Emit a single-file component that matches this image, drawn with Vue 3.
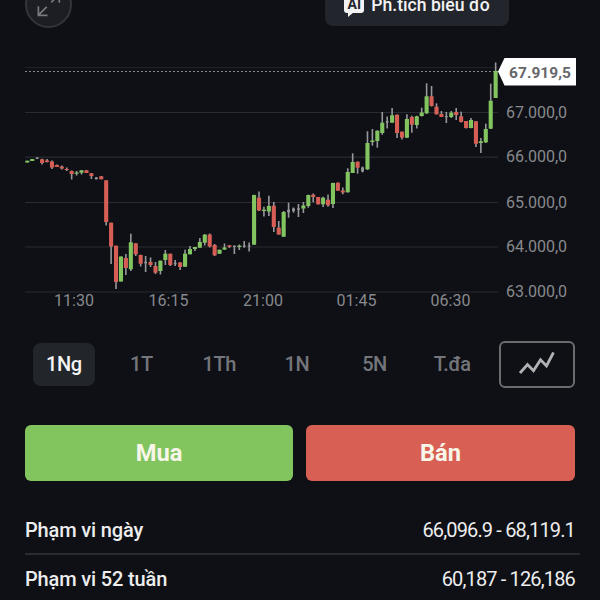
<script setup>
// Each candle: [high, body top, body bottom, low, tone] in chart pixels
const raw = [
  [160.7, 160.7, 162.5, 162.5, 'g'], [159, 159, 161, 161, 'g'], [157.5, 157.5, 159, 159, 'n'],
  [158.7, 159.3, 163, 164.5, 'r'], [159, 160.5, 162, 162.5, 'r'], [160.5, 161.5, 167.5, 169, 'r'],
  [164.5, 165, 167, 167, 'r'], [165.5, 166.5, 168.5, 169.5, 'r'], [167.5, 169, 170, 171, 'r'],
  [170.5, 171, 174, 179.5, 'r'], [171, 172.5, 173.7, 175.5, 'g'], [170, 170.3, 172.7, 174.5, 'g'],
  [170, 170.3, 173, 173, 'r'], [173, 173.3, 176, 179, 'r'], [177.3, 177.3, 179.3, 179.3, 'n'],
  [176, 176.3, 179.3, 179.3, 'r'], [180.3, 180.3, 222, 225.5, 'r'], [222.7, 222.7, 246.5, 264, 'r'],
  [245.7, 245.7, 282, 289, 'r'], [256.5, 256.5, 281.5, 281.5, 'g'], [254, 258, 268, 275, 'r'],
  [233.7, 242.3, 269.3, 271, 'g'], [243.3, 243.3, 254.3, 256, 'r'], [254.7, 255, 263.7, 266.5, 'r'],
  [256, 261.8, 263.3, 272, 'n'], [257.5, 262, 265, 267, 'r'], [262, 266, 272.7, 274, 'r'],
  [260.5, 260.7, 271, 274.5, 'g'], [250, 253.7, 260, 265, 'g'], [253.7, 253.7, 265, 266, 'r'],
  [260, 262.8, 264.2, 266, 'n'], [262, 262.5, 267, 270, 'r'], [249.7, 253.7, 266.7, 267, 'g'],
  [246, 249, 254.3, 254.3, 'g'], [247, 247, 249, 251, 'g'], [238, 242, 247.7, 247.7, 'g'],
  [234, 234.7, 242.7, 245.5, 'g'], [233.5, 234.5, 246.5, 247.5, 'r'], [244, 245, 255.3, 256, 'r'],
  [249.7, 249.7, 253.7, 254, 'g'], [243.5, 247.5, 249.5, 250, 'g'], [245, 245.3, 246.8, 248, 'r'],
  [245.5, 245.7, 247, 254, 'n'], [244.5, 245.7, 247, 250, 'g'], [241, 245.5, 246.8, 247.7, 'n'],
  [242.5, 245.5, 246.5, 251.5, 'n'], [194.7, 195, 244.7, 245, 'g'], [191.5, 197.7, 210.5, 211, 'r'],
  [206.7, 209.7, 211, 216.5, 'g'], [195.7, 206, 211.5, 216, 'g'], [202, 205.7, 227, 232, 'r'],
  [221, 227.7, 234.5, 234.7, 'r'], [211, 212, 236.7, 237, 'g'], [202.7, 209.7, 212.3, 217.7, 'n'],
  [207.5, 208.5, 211, 212.7, 'n'], [204, 208.3, 209.7, 217, 'n'], [202, 205.5, 208.5, 213, 'g'],
  [194.7, 195, 206, 207.7, 'g'], [193.5, 194.7, 197, 202.3, 'r'], [197, 197, 204.3, 204.5, 'r'],
  [196.7, 197.7, 204.3, 207, 'g'], [194.5, 199.7, 205.3, 206.7, 'r'], [182.7, 183, 204, 208, 'g'],
  [182.5, 182.7, 190.7, 191, 'r'], [187.5, 190.5, 192.5, 194.3, 'r'], [168.3, 172, 192.3, 192.5, 'g'],
  [153.3, 162, 173, 173, 'g'], [161.5, 161.7, 167.7, 173.7, 'r'], [166.5, 167.5, 171.5, 172.3, 'n'],
  [131.3, 143, 169.3, 170, 'g'], [129, 140.5, 142, 145.7, 'g'], [130.3, 130.7, 141, 147.7, 'g'],
  [112, 122.7, 133, 134.7, 'g'], [116.5, 121, 122.5, 128.5, 'n'], [108, 115.3, 122.7, 122.7, 'g'],
  [114.5, 114.7, 133, 138, 'r'], [131.5, 131.7, 137.5, 139.5, 'r'], [114.3, 119, 137.7, 138, 'g'],
  [115.7, 117, 124.7, 132.7, 'r'], [115.7, 116.3, 125, 128.5, 'g'], [107.7, 112.5, 116, 116.5, 'g'],
  [83.3, 96.3, 113.3, 114, 'g'], [86, 96.3, 106, 106.5, 'r'], [103.3, 106.7, 114.3, 114.5, 'r'],
  [111, 114, 117, 117, 'r'], [112, 116, 117.2, 123, 'n'], [111, 112.7, 117, 118, 'g'],
  [108, 112, 115, 120, 'r'], [111.7, 116.3, 122, 122.5, 'r'], [121, 121, 128, 128.5, 'r'],
  [118, 120, 128, 128.3, 'g'], [121, 121.3, 143.7, 147, 'r'], [138, 141.3, 143, 153, 'g'],
  [123.7, 129, 142.3, 143, 'g'], [83.7, 100.7, 128.7, 129, 'g'], [62.5, 71, 98, 98, 'g'],
]
const candles = raw.map(([high, top, bottom, low, tone], i) => ({
  x: 27.3 + i * 4.93, high, top, bottom, low, tone,
  w: tone === 'n' ? 2.8 : 4.1,
}))
const levels = [
  { y: 112.5, label: '67.000,0' },
  { y: 157.2, label: '66.000,0' },
  { y: 202.5, label: '65.000,0' },
  { y: 247, label: '64.000,0' },
  { y: 292, label: '63.000,0' },
]
const times = [
  { x: 74, label: '11:30' },
  { x: 168.5, label: '16:15' },
  { x: 263, label: '21:00' },
  { x: 356.5, label: '01:45' },
  { x: 450.5, label: '06:30' },
]
const periods = ['1Ng', '1T', '1Th', '1N', '5N', 'T.đa']
const ranges = [
  { name: 'Phạm vi ngày', value: '66,096.9 - 68,119.1' },
  { name: 'Phạm vi 52 tuần', value: '60,187 - 126,186' },
]
</script>

<template>
  <main class="screen">
    <header class="top">
      <button class="expand" aria-label="Toàn màn hình">
        <svg width="46" height="46" viewBox="0 0 46 46">
          <path d="M20.7 24.8 12.4 33.1M12.4 24.2V33.3H21.5M25.2 20.4 33 12.6M24.3 12.2H33.3V20.8" />
        </svg>
      </button>
      <button class="analyze">
        <span class="ai">AI</span>
        <span>Ph.tích biểu đồ</span>
      </button>
    </header>

    <svg class="chart" width="600" height="265" viewBox="0 55 600 265">
      <line class="grid faint" x1="25" x2="498" y1="67.5" y2="67.5" />
      <line v-for="l in levels" :key="l.y" class="grid" x1="25" x2="498" :y1="l.y" :y2="l.y" />
      <line class="current" x1="25" x2="498" y1="71.5" y2="71.5" />
      <g v-for="(c, i) in candles" :key="i">
        <rect class="wick" :x="c.x - 0.8" :y="c.high" width="1.6" :height="c.low - c.high" />
        <rect :class="c.tone" :x="c.x - c.w / 2" :y="c.top" :width="c.w" :height="c.bottom - c.top" />
      </g>
      <text v-for="l in levels" :key="l.label" class="axis" x="506" :y="l.y + 5.2" textLength="61">{{ l.label }}</text>
      <text v-for="t in times" :key="t.label" class="axis" :x="t.x" y="306" text-anchor="middle">{{ t.label }}</text>
      <path class="flag" d="M498 71.5 504.5 58H576V85.5H504.5Z" />
      <text class="price" x="509" y="77.8" textLength="62">67.919,5</text>
    </svg>

    <nav class="periods">
      <button v-for="(p, i) in periods" :key="p" class="period" :class="{ active: i === 0 }">{{ p }}</button>
      <button class="style" aria-label="Kiểu biểu đồ">
        <svg width="40" height="30" viewBox="0 0 40 30">
          <path d="M3 24 10.5 15.6 16.5 21.8 23.5 10.8 29.5 17 36.5 3.5" />
        </svg>
      </button>
    </nav>

    <div class="trade">
      <button class="buy">Mua</button>
      <button class="sell">Bán</button>
    </div>

    <dl class="ranges">
      <div v-for="r in ranges" :key="r.name" class="row">
        <dt>{{ r.name }}</dt>
        <dd>{{ r.value }}</dd>
      </div>
    </dl>
  </main>
</template>

<style>
body {
  background: #0e1015;
}
</style>

<style scoped>
.screen {
  width: 600px;
  height: 600px;
  overflow: hidden;
  display: flex;
  flex-direction: column;
  background: #0e1015;
  font-family: Roboto, "Noto Sans", sans-serif;
}
button {
  font: inherit;
  border: 0;
  padding: 0;
  background: none;
  box-sizing: border-box;
}
.top {
  height: 55px;
  flex: none;
  display: flex;
  justify-content: space-between;
  align-items: flex-start;
  padding: 0 91px 0 25px;
}
.expand {
  width: 47px;
  height: 47px;
  margin-top: -19px;
  border: 2px solid #33353a;
  border-radius: 50%;
  background: #1c1e23;
  display: flex;
  align-items: center;
  justify-content: center;
}
.expand svg {
  flex: none;
}
.expand path {
  fill: none;
  stroke: #77797d;
  stroke-width: 1.7;
}
.analyze {
  width: 184px;
  height: 45px;
  margin-top: -19px;
  padding-top: 2px;
  border-radius: 8px;
  background: #22262c;
  color: #f2f2f3;
  font-size: 17.6px;
  font-weight: 500;
  display: flex;
  align-items: center;
  justify-content: center;
  gap: 7px;
  white-space: nowrap;
}
.ai {
  width: 20px;
  height: 19px;
  margin-top: -3px;
  border-radius: 3px;
  background: #f2f2f3;
  color: #22262c;
  font-size: 14px;
  font-weight: 700;
  line-height: 21px;
  position: relative;
}
.ai::after {
  content: "";
  position: absolute;
  left: 4px;
  top: 18px;
  border-top: 5px solid #f2f2f3;
  border-right: 6px solid transparent;
}
.chart {
  flex: none;
  display: block;
}
.grid {
  stroke: #292b31;
  stroke-width: 1.2;
}
.faint {
  stroke: #202227;
}
.current {
  stroke: #85868a;
  stroke-width: 1.1;
  stroke-dasharray: 2 2;
}
.wick {
  fill: #97989b;
}
.g {
  fill: #82c45f;
}
.r {
  fill: #d75e54;
}
.n {
  fill: #97989b;
}
.axis {
  fill: #88898d;
  font-size: 16px;
}
.flag {
  fill: #fff;
}
.price {
  fill: #66676b;
  font-size: 15.5px;
  font-weight: 700;
}
.periods {
  height: 48px;
  flex: none;
  margin-top: 20px;
  padding: 0 25px 0 26px;
  display: flex;
  align-items: center;
}
.period {
  width: 62px;
  height: 43px;
  margin: 0 8.9px 0 6.8px;
  border-radius: 8px;
  color: #74767b;
  font-size: 20px;
  letter-spacing: -0.4px;
  font-weight: 500;
}
.period.active {
  background: #22262b;
  color: #f4f4f5;
}
.style {
  width: 76px;
  height: 47px;
  margin-left: auto;
  border: 2px solid #6b6c70;
  border-radius: 6px;
  display: flex;
  align-items: center;
  justify-content: center;
}
.style path {
  fill: none;
  stroke: #b0b1b3;
  stroke-width: 2.8;
}
.trade {
  flex: none;
  display: grid;
  grid-template-columns: 268px 269px;
  gap: 13px;
  height: 56px;
  margin-top: 37px;
  padding: 0 25px;
}
.trade button {
  border-radius: 6px;
  color: #f8f5e9;
  font-size: 23.7px;
  font-weight: 700;
}
.trade .buy {
  background: #82c55f;
}
.trade .sell {
  background: #d75f53;
}
.ranges {
  margin: 25px 20px 0 25px;
}
.row {
  height: 47px;
  display: flex;
  justify-content: space-between;
  align-items: center;
  padding-right: 5px;
  color: #ededee;
  font-size: 20px;
}
.row + .row {
  border-top: 2px solid #292b31;
}
dt {
  font-weight: 500;
  letter-spacing: -0.15px;
}
dd {
  margin: 0;
  letter-spacing: -0.85px;
}
</style>
